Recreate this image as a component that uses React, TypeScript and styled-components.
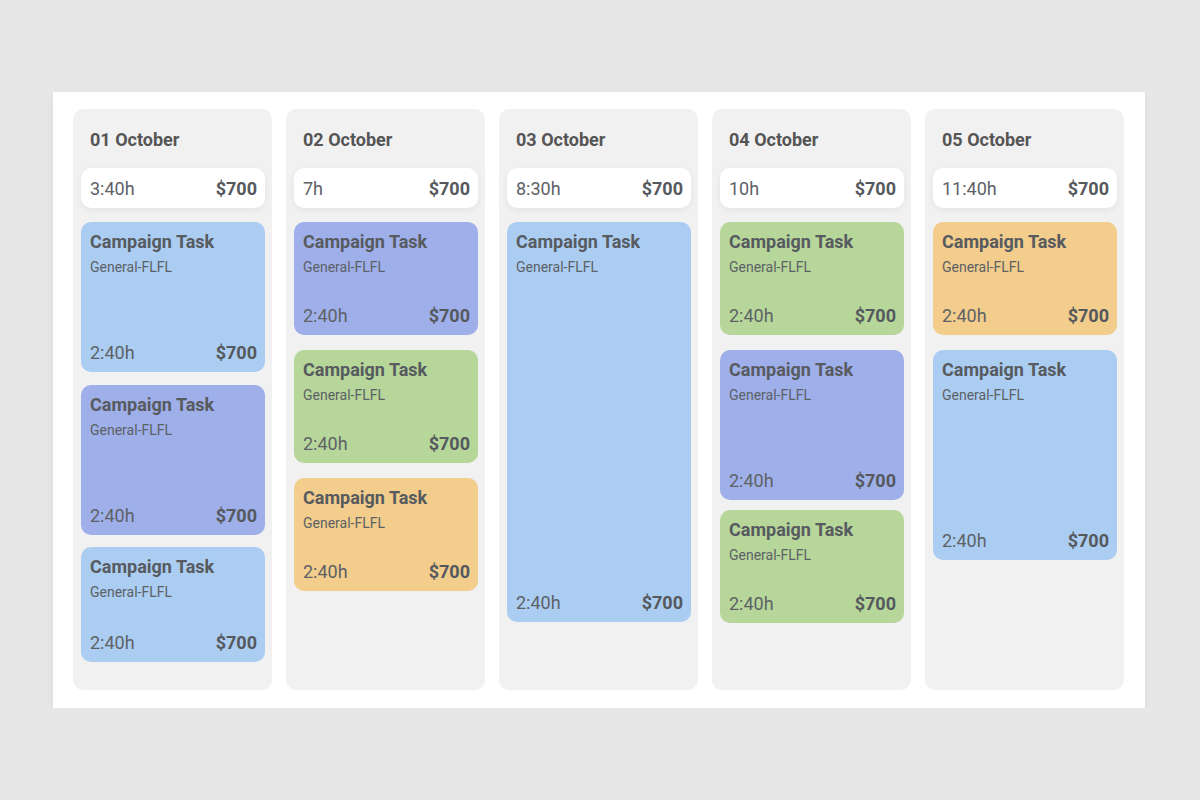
import React from 'react';
import styled, { createGlobalStyle } from 'styled-components';

type Tone = 'blue' | 'purple' | 'green' | 'orange';

interface Task {
  tone: Tone;
  height: number;
  space: number; // gap above the card
}

interface Day {
  date: string;
  total: string;
  tasks: Task[];
}

const TONES: Record<Tone, string> = {
  blue: '#abcdf2',
  purple: '#9fafe9',
  green: '#b6d69a',
  orange: '#f2cd8c',
};

const DAYS: Day[] = [
  {
    date: '01 October',
    total: '3:40h',
    tasks: [
      { tone: 'blue', height: 150, space: 14 },
      { tone: 'purple', height: 150, space: 13 },
      { tone: 'blue', height: 115, space: 12 },
    ],
  },
  {
    date: '02 October',
    total: '7h',
    tasks: [
      { tone: 'purple', height: 113, space: 14 },
      { tone: 'green', height: 113, space: 15 },
      { tone: 'orange', height: 113, space: 15 },
    ],
  },
  {
    date: '03 October',
    total: '8:30h',
    tasks: [{ tone: 'blue', height: 400, space: 14 }],
  },
  {
    date: '04 October',
    total: '10h',
    tasks: [
      { tone: 'green', height: 113, space: 14 },
      { tone: 'purple', height: 150, space: 15 },
      { tone: 'green', height: 113, space: 10 },
    ],
  },
  {
    date: '05 October',
    total: '11:40h',
    tasks: [
      { tone: 'orange', height: 113, space: 14 },
      { tone: 'blue', height: 210, space: 15 },
    ],
  },
];

const App: React.FC = () => (
  <>
    <GlobalStyle />
    <Board>
      {DAYS.map((day) => (
        <Column key={day.date}>
          <DayTitle>{day.date}</DayTitle>
          <Summary>
            <Hours>{day.total}</Hours>
            <Amount>$700</Amount>
          </Summary>
          {day.tasks.map((task, i) => (
            <TaskCard key={i} $tone={task.tone} $height={task.height} $space={task.space}>
              <div>
                <TaskTitle>Campaign Task</TaskTitle>
                <TaskMeta>General-FLFL</TaskMeta>
              </div>
              <CardFooter>
                <Hours>2:40h</Hours>
                <Amount>$700</Amount>
              </CardFooter>
            </TaskCard>
          ))}
        </Column>
      ))}
    </Board>
  </>
);

export default App;

/* ── Styles ───────────────────────────────────────── */

const GlobalStyle = createGlobalStyle`
  html, body {
    margin: 0;
    background: #e8e7e8;
    font-family: Roboto, "Liberation Sans", sans-serif;
  }
  * {
    box-sizing: border-box;
  }
`;

const Board = styled.div`
  width: 1092px;
  margin: 92px 0 0 53px;
  padding: 17px 21px 18px 20px;
  background: #ffffff;
  box-shadow: 0 2px 8px rgba(0, 0, 0, 0.06);
  display: grid;
  grid-template-columns: repeat(5, 199px);
  gap: 14px;
`;

const Column = styled.div`
  height: 581px;
  background: #f1f1f1;
  border-radius: 10px;
  padding: 0 7px 8px 8px;
  display: flex;
  flex-direction: column;
`;

const DayTitle = styled.div`
  padding: 21px 9px 0;
  flex: 0 0 59px;
  font-size: 18px;
  line-height: 20px;
  font-weight: 700;
  color: #555555;
`;

const Summary = styled.div`
  flex: 0 0 40px;
  background: #ffffff;
  border-radius: 10px;
  box-shadow: 0 2px 6px rgba(0, 0, 0, 0.06);
  padding: 2px 8px 0 9px;
  display: flex;
  align-items: center;
  justify-content: space-between;
`;

const TaskCard = styled.div<{ $tone: Tone; $height: number; $space: number }>`
  flex: 0 0 ${({ $height }) => $height}px;
  margin-top: ${({ $space }) => $space}px;
  background: ${({ $tone }) => TONES[$tone]};
  border-radius: 10px;
  padding: 10px 8px 9px 9px;
  display: flex;
  flex-direction: column;
  justify-content: space-between;
`;

const TaskTitle = styled.div`
  font-size: 18px;
  line-height: 20px;
  font-weight: 700;
  color: #575b60;
`;

const TaskMeta = styled.div`
  margin-top: 7px;
  font-size: 14px;
  line-height: 17px;
  color: #5c6166;
`;

const CardFooter = styled.div`
  display: flex;
  align-items: center;
  justify-content: space-between;
  line-height: 20px;
`;

const Hours = styled.span`
  font-size: 18px;
  line-height: 20px;
  color: #5e6266;
`;

const Amount = styled.span`
  font-size: 18px;
  line-height: 20px;
  font-weight: 700;
  color: #55595d;
`;
